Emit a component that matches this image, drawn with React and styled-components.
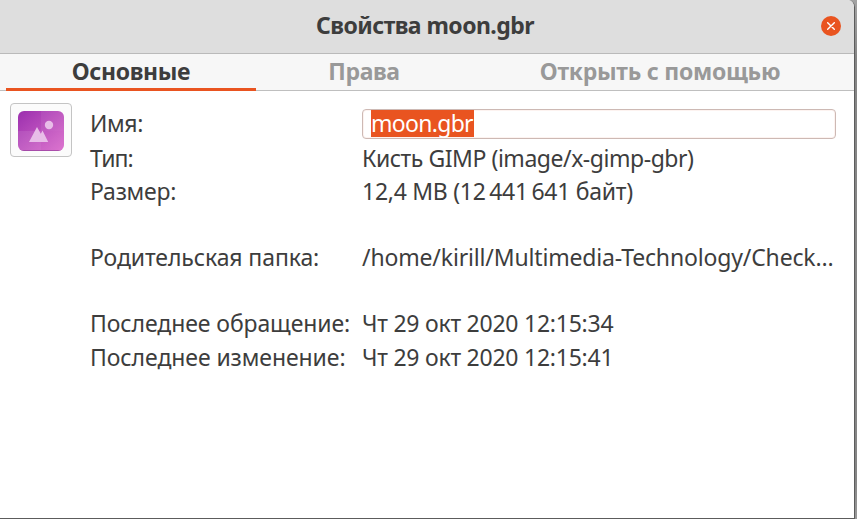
import React from "react";
import styled, { createGlobalStyle } from "styled-components";

const GlobalStyle = createGlobalStyle`
  * { box-sizing: border-box; }
  body { margin: 0; background: #858585; }
`;

const Desktop = styled.div`
  height: 519px;
  padding: 0 2px 1px 0;
  overflow: hidden;
  background: linear-gradient(180deg, #a3a3a3 0, #858585 60px, #858585 480px, #999 519px);
  font: 23px/32px "Noto Sans", sans-serif;
  color: #3d3d3d;
  white-space: nowrap;
`;

const Window = styled.main`
  display: flex;
  flex-direction: column;
  width: 855px;
  height: 519px;
  overflow: hidden;
  background: #fff;
  border-right: 1px solid #5c5c5c;
  border-bottom: 1px solid #5c5c5c;
  border-top-right-radius: 7px;
`;

const TitleBar = styled.header`
  display: grid;
  grid-template-columns: 1fr auto 1fr;
  align-items: center;
  flex: none;
  height: 54px;
  padding: 0 13px 1px 10px;
  background: #dedede;
  border-bottom: 1px solid #bababa;
`;

const Title = styled.h1`
  grid-column: 2;
  margin: 0 1px 2px 0;
  font-size: 23px;
  line-height: 32px;
  font-weight: 700;
  letter-spacing: -0.55px;
`;

const CloseButton = styled.button`
  justify-self: end;
  display: grid;
  place-items: center;
  width: 20px;
  height: 20px;
  padding: 0;
  border: 0;
  border-radius: 50%;
  background: #e95420;
`;

const TabBar = styled.nav`
  display: grid;
  grid-template-columns: 250px 216px 376px;
  flex: none;
  height: 37px;
  padding-left: 6px;
  background: #f7f7f7;
  box-shadow: inset 0 -1px #bfbfbf;
`;

const Tab = styled.button`
  height: 37px;
  padding: 0 0 3px;
  border: 0;
  background: none;
  font: 700 23px/32px "Noto Sans", sans-serif;
  letter-spacing: ${(p) => p.$tracking}px;
  color: ${(p) => (p.$active ? "#3d3d3d" : "#999")};
  box-shadow: ${(p) => (p.$active ? "inset 0 -3px #e95420" : "none")};
`;

const Content = styled.section`
  display: flex;
  padding: 12px 18px 0 10px;
`;

const IconButton = styled.button`
  flex: none;
  display: grid;
  place-items: center;
  width: 62px;
  height: 54px;
  padding: 2px 0 0;
  border: 1px solid #c4c4c4;
  border-radius: 4px;
  background: #fbfbfb;
`;

const Properties = styled.dl`
  display: grid;
  grid-template-columns: 272px 475px;
  grid-template-rows: 35px 33px 33px 33px 33px 33px 34px 33px;
  margin: 4px 0 0 18px;
`;

const Label = styled.dt`
  grid-column: 1;
  grid-row: ${(p) => p.$row};
  letter-spacing: ${(p) => p.$tracking}px;
`;

const Value = styled.dd`
  grid-column: 2;
  grid-row: ${(p) => p.$row};
  margin: 0;
  letter-spacing: ${(p) => p.$tracking}px;
`;

const NameField = styled.div`
  display: flex;
  width: 474px;
  height: 30px;
  margin: 2px 0 0;
  padding: 0 8px;
  border: 1px solid #cdb9b4;
  border-radius: 4px;
  box-shadow: inset 0 0 0 1px #fdf3f0;
`;

const Selection = styled.span`
  width: 103px;
  height: 27px;
  line-height: 26px;
  background: #e95420;
  color: #fff;
`;

const properties = [
  { row: 2, label: "Тип:", labelTracking: -0.9, value: "Кисть GIMP (image/x-gimp-gbr)", tracking: -0.46 },
  { row: 3, label: "Размер:", labelTracking: -0.25, value: "12,4 MB (12\u2009441\u2009641 байт)", tracking: -0.27 },
  { row: 5, label: "Родительская папка:", labelTracking: -0.1, value: "/home/kirill/Multimedia-Technology/Check…", tracking: -0.16 },
  { row: 7, label: "Последнее обращение:", labelTracking: -0.09, value: "Чт 29 окт 2020 12:15:34", tracking: -0.24 },
  { row: 8, label: "Последнее изменение:", labelTracking: -0.08, value: "Чт 29 окт 2020 12:15:41", tracking: -0.24 },
];

function ImageIcon() {
  return (
    <svg width="46" height="40" viewBox="0 0 46 40" aria-hidden="true">
      <defs>
        <linearGradient id="tile" x1="0" y1="0" x2="1" y2="1">
          <stop offset="0" stopColor="#9b2fae" />
          <stop offset="1" stopColor="#dc70cd" />
        </linearGradient>
        <clipPath id="tileShape">
          <rect width="46" height="40" rx="6" />
        </clipPath>
      </defs>
      <g clipPath="url(#tileShape)">
        <rect width="46" height="40" fill="url(#tile)" />
        <path d="M23 0h23v20H23z" fill="#fff" opacity=".06" />
        <path d="M0 20h23v20H0z" fill="#fff" opacity=".09" />
        <path d="M23 20h23v20H23z" fill="#fff" opacity=".04" />
        <path d="M0 39.500h46" stroke="#8e3a97" opacity=".6" />
      </g>
      <circle cx="31" cy="14" r="4.200" fill="#e8bde8" />
      <path d="M11 31 19 16l3.800 6.800 1.700-3.200L30.200 31z" fill="#e8bde8" />
    </svg>
  );
}

export default function App() {
  return (
    <>
      <GlobalStyle />
      <Desktop>
        <Window>
          <TitleBar>
            <Title>Свойства moon.gbr</Title>
            <CloseButton aria-label="Закрыть">
              <svg width="8" height="8" viewBox="0 0 8 8" stroke="#fff" strokeWidth="1.400" strokeLinecap="round">
                <path d="M.7.7l6.600 6.600M7.300.7L.7 7.300" />
              </svg>
            </CloseButton>
          </TitleBar>
          <TabBar>
            <Tab $active $tracking={-0.36}>Основные</Tab>
            <Tab $tracking={-0.37}>Права</Tab>
            <Tab $tracking={-0.27}>Открыть с помощью</Tab>
          </TabBar>
          <Content>
            <IconButton aria-label="Значок">
              <ImageIcon />
            </IconButton>
            <Properties>
              <Label $row={1} $tracking={-0.35}>Имя:</Label>
              <Value $row={1} $tracking={-0.7}>
                <NameField>
                  <Selection>moon.gbr</Selection>
                </NameField>
              </Value>
              {properties.map((p) => (
                <React.Fragment key={p.row}>
                  <Label $row={p.row} $tracking={p.labelTracking}>{p.label}</Label>
                  <Value $row={p.row} $tracking={p.tracking}>{p.value}</Value>
                </React.Fragment>
              ))}
            </Properties>
          </Content>
        </Window>
      </Desktop>
    </>
  );
}
